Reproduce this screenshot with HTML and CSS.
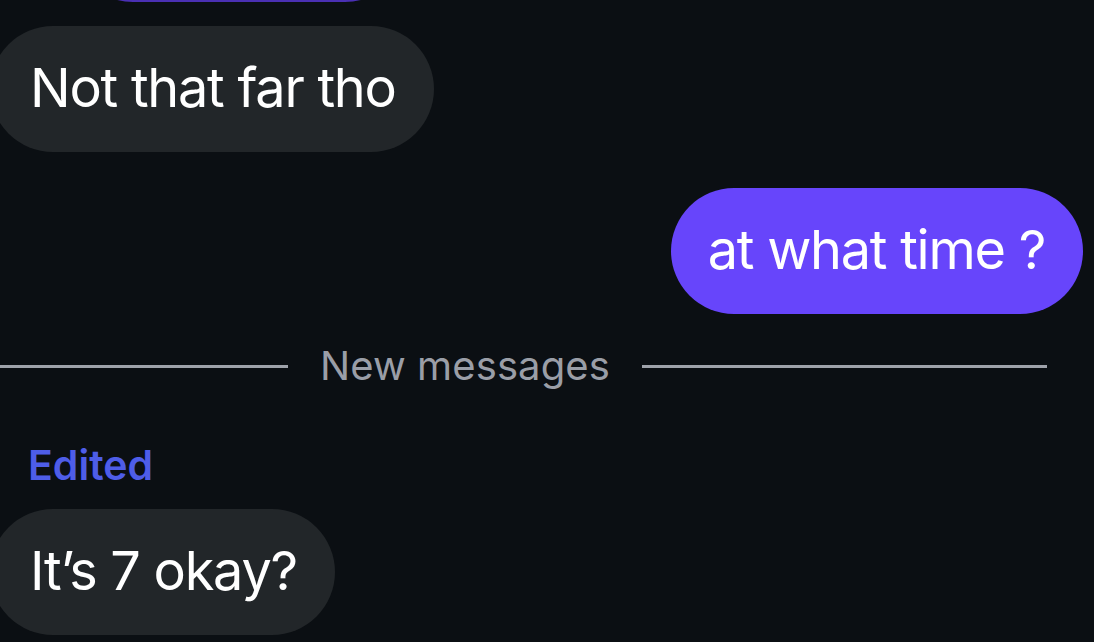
FILE: index.html
```html
<!DOCTYPE html>
<html>
<head>
<meta charset="utf-8">
<link rel="stylesheet" href="styles.css">
</head>
<body>
<div class="chat">
  <div class="bubble prev"></div>
  <div class="bubble in first">Not that far tho</div>
  <div class="bubble out">at what time ?</div>
  <div class="divider">
    <span class="line left"></span>
    <span class="label">New messages</span>
    <span class="line right"></span>
  </div>
  <div class="edited">Edited</div>
  <div class="bubble in last">It’s 7 okay?</div>
</div>
</body>
</html>
```

FILE: styles.css
```css
html, body {
  margin: 0;
  padding: 0;
  background: #0b0f13;
  overflow: hidden;
}
body {
  width: 1094px;
  height: 642px;
  font-family: Inter, "Noto Sans", "Liberation Sans", sans-serif;
}
.chat {
  display: flex;
  flex-direction: column;
  align-items: flex-start;
}
.bubble {
  height: 126px;
  line-height: 124px;
  border-radius: 63px;
  font-size: 54px;
  color: #ffffff;
  padding: 0 38px;
  white-space: nowrap;
  box-sizing: border-box;
  letter-spacing: -1.25px;
}
.bubble.prev {
  margin-top: -124px;
  margin-left: 70px;
  width: 338px;
  background: #4a30b4;
}
.bubble.in {
  background: #222629;
  margin-left: -10px;
  padding-left: 40px;
}
.bubble.first {
  margin-top: 24px;
}
.bubble.out {
  background: #6745fb;
  align-self: flex-end;
  margin-top: 36px;
  margin-right: 11px;
  padding-left: 37px;
}
.divider {
  align-self: stretch;
  display: flex;
  align-items: center;
  margin-top: 28px;
  margin-right: 47px;
  height: 48px;
  gap: 32px;
}
.line {
  height: 3px;
  background: #9ea2aa;
}
.line.left {
  width: 288px;
}
.line.right {
  flex: 1;
}
.label {
  font-size: 40px;
  line-height: 48px;
  color: #9a9ea7;
  white-space: nowrap;
  letter-spacing: 0.1px;
}
.edited {
  margin-top: 51px;
  padding-left: 28px;
  font-size: 41px;
  line-height: 48px;
  font-weight: 600;
  color: #4e5de8;
}
.bubble.last {
  margin-top: 20px;
}
```
